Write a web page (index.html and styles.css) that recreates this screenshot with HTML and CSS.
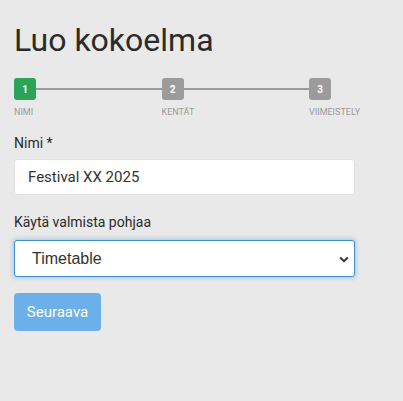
FILE: index.html
```html
<!DOCTYPE html>
<html lang="fi">
<head>
<meta charset="utf-8">
<link rel="stylesheet" href="styles.css">
</head>
<body>
<main class="page">
  <h1 class="title">Luo kokoelma</h1>
  <div class="steps">
    <div class="step-box active">1</div>
    <div class="step-line"></div>
    <div class="step-box">2</div>
    <div class="step-line"></div>
    <div class="step-box">3</div>
    <div class="step-label">NIMI</div>
    <div></div>
    <div class="step-label">KENTÄT</div>
    <div></div>
    <div class="step-label">VIIMEISTELY</div>
  </div>
  <form class="form">
    <label class="field-label" for="nimi">Nimi *</label>
    <input class="text-input" id="nimi" type="text" value="Festival XX 2025">
    <label class="field-label second" for="pohja">Käytä valmista pohjaa</label>
    <div class="select-wrap">
      <select class="select" id="pohja">
        <option>Timetable</option>
      </select>
      <svg class="chevron" width="10" height="7" viewBox="0 0 10 7"><path d="M1.2 1.5 L5 5.2 L8.8 1.5" fill="none" stroke="#333" stroke-width="2"/></svg>
    </div>
    <button class="btn" type="button">Seuraava</button>
  </form>
</main>
</body>
</html>
```
FILE: styles.css
```css
* { box-sizing: border-box; }
html, body { margin: 0; padding: 0; }
body {
  background: #e9e9e9;
  font-family: Roboto, "Noto Sans", sans-serif;
  color: #333;
}
.page {
  width: 341px;
  margin-left: 14px;
  padding-top: 20px;
}
.title {
  margin: 0;
  font-size: 32px;
  font-weight: 400;
  line-height: 40px;
  color: #2b2b2b;
}
.steps {
  margin-top: 18px;
  width: 317px;
  display: grid;
  grid-template-columns: 22px 1fr 22px 1fr 22px;
  align-items: center;
}
.step-box {
  width: 22px;
  height: 22px;
  border-radius: 3px;
  background: #9b9b9b;
  color: #fff;
  font-size: 10px;
  font-weight: 700;
  display: flex;
  align-items: center;
  justify-content: center;
}
.step-box.active { background: #2aa556; }
.step-line {
  height: 2px;
  background: #9b9b9b;
}
.step-label {
  margin-top: 7px;
  font-size: 9px;
  line-height: 11px;
  color: #999;
  white-space: nowrap;
}
.form {
  margin-top: 16px;
  display: flex;
  flex-direction: column;
  align-items: flex-start;
}
.field-label {
  font-size: 14px;
  line-height: 18px;
  color: #2b2b2b;
}
.field-label.second { margin-top: 18px; }
.text-input {
  margin-top: 7px;
  width: 341px;
  height: 36px;
  border: 1px solid #e2e2e2;
  border-radius: 3px;
  background: #fff;
  padding: 0 13px;
  font-family: inherit;
  font-size: 15px;
  color: #333;
}
.select-wrap {
  position: relative;
  margin-top: 9px;
  width: 341px;
}
.select {
  display: block;
  appearance: none;
  -webkit-appearance: none;
  width: 341px;
  height: 37px;
  border: 1px solid #3d8fd6;
  border-radius: 3px;
  background: #fff;
  box-shadow: 0 0 4px 1px rgba(90, 150, 210, 0.45);
  padding: 0 17px;
  font-family: "Liberation Sans", Arial, sans-serif;
  font-size: 16px;
  color: #333;
}
.chevron {
  position: absolute;
  right: 6px;
  top: 16px;
}
.btn {
  margin-top: 16px;
  width: 87px;
  height: 38px;
  border: 0;
  border-radius: 4px;
  background: #6cb0ea;
  color: #fff;
  font-family: inherit;
  font-size: 15px;
  padding: 0;
}
```
